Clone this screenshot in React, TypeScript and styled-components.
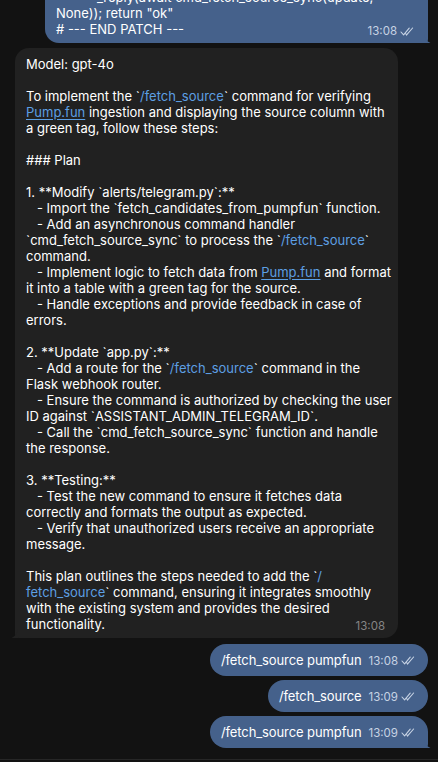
import React from "react";
import styled, { createGlobalStyle } from "styled-components";

const Global = createGlobalStyle`
  html, body { margin: 0; padding: 0; background: #121212; }
  body { font-family: Inter, "Noto Sans", "Liberation Sans", sans-serif; -webkit-font-smoothing: antialiased; }
`;

const Screen = styled.div`
  height: 762px;
  display: flex;
  flex-direction: column;
  background: #121212;
  overflow: hidden;
`;

const Chat = styled.div`
  flex: 1;
  min-height: 0;
  display: flex;
  flex-direction: column;
  justify-content: flex-end;
  overflow: hidden;
  padding: 0 10px 11px 15px;
  & > * { flex-shrink: 0; }
`;

const Footer = styled.div`
  flex-shrink: 0;
  height: 2px;
  border-top: 1px solid #262626;
  background: #121212;
`;

const Bubble = styled.div<{ $out?: boolean; $gap: number; $width?: number }>`
  position: relative;
  align-self: ${(p) => (p.$out ? "flex-end" : "flex-start")};
  margin-top: ${(p) => p.$gap}px;
  width: ${(p) => (p.$width ? `${p.$width}px` : "auto")};
  box-sizing: border-box;
  background: ${(p) => (p.$out ? "#45618b" : "#212121")};
  color: #ffffff;
  border-radius: 14px;
  ${(p) => (p.$out ? "border-bottom-right-radius: 4px;" : "border-bottom-left-radius: 4px;")}
  padding: 8px 13px 6px 11px;
  font-size: 13px;
`;

const Pill = styled.div<{ $gap: number; $tail?: boolean }>`
  position: relative;
  align-self: flex-end;
  margin-top: ${(p) => p.$gap}px;
  height: 32px;
  box-sizing: border-box;
  display: flex;
  align-items: center;
  gap: 7px;
  padding: 0 12px 0 11px;
  background: #45618b;
  color: #ffffff;
  border-radius: 16px;
  ${(p) => (p.$tail ? "border-bottom-right-radius: 4px;" : "")}
  font-size: 13px;
`;

const Line = styled.div<{ $indent?: number }>`
  height: 16px;
  line-height: 16px;
  white-space: pre;
  padding-left: ${(p) => p.$indent ?? 0}px;
`;

const LastLine = styled(Line)`
  display: flex;
  justify-content: space-between;
  align-items: flex-start;
`;

const Cmd = styled.span`
  color: #5d9fe3;
`;

const Link = styled.span`
  color: #5d9fe3;
  text-decoration: underline;
  text-underline-offset: 2px;
`;

const Meta = styled.span<{ $out?: boolean }>`
  display: inline-flex;
  align-items: center;
  gap: 3px;
  font-size: 11.5px;
  line-height: 16px;
  padding-top: 2px;
  color: ${(p) => (p.$out ? "#c7d3e4" : "#858585")};
`;

const PillText = styled.span`
  white-space: pre;
  line-height: 16px;
  letter-spacing: -0.1px;
`;

const PillMeta = styled(Meta)`
  padding-top: 1px;
`;

const TailSvg = styled.svg<{ $out?: boolean }>`
  position: absolute;
  bottom: 0;
  ${(p) => (p.$out ? "right: -6px;" : "left: -7px;")}
  width: 10px;
  height: 14px;
`;

const Checks = () => (
  <svg width="15" height="9" viewBox="0 0 15 9" fill="none" stroke="currentColor" strokeWidth="1.1" strokeLinecap="round" strokeLinejoin="round">
    <path d="M1 5 L3.6 7.8 L9.2 1.2" />
    <path d="M6.6 7.8 L12.6 1" />
    <path d="M5.6 6.7 L6.6 7.8" />
  </svg>
);

const Tail = ({ out }: { out?: boolean }) =>
  out ? (
    <TailSvg $out viewBox="0 0 10 14">
      <path d="M0 0 C0 7 1.5 11.5 7 14 L0 14 Z" fill="#45618b" transform="translate(-0.5 0)" />
    </TailSvg>
  ) : (
    <TailSvg viewBox="0 0 10 14">
      <path d="M10 0 C10 7 8.5 11.5 3 14 L10 14 Z" fill="#212121" transform="translate(0.5 0)" />
    </TailSvg>
  );

const F = () => <Cmd>/fetch_source</Cmd>;

export default function App() {
  return (
    <Screen>
      <Global />
      <Chat>
        <Bubble $out $gap={0} $width={383}>
          <Line>{'if text.startswith("/fetch_source"):'}</Line>
          <Line $indent={41}>{"_reply(await cmd_fetch_source_sync(update,"}</Line>
          <Line>{'None)); return "ok"'}</Line>
          <LastLine>
            <span>{"# --- END PATCH ---"}</span>
            <Meta $out>
              13:08
              <Checks />
            </Meta>
          </LastLine>
          <Tail out />
        </Bubble>

        <Bubble $gap={5} $width={383}>
          <Line>Model: gpt-4o</Line>
          <Line> </Line>
          <Line>
            To implement the `<F />` command for verifying
          </Line>
          <Line>
            <Link>Pump.fun</Link> ingestion and displaying the source column with
          </Line>
          <Line>a green tag, follow these steps:</Line>
          <Line> </Line>
          <Line>### Plan</Line>
          <Line> </Line>
          <Line>1. **Modify `alerts/telegram.py`:**</Line>
          <Line>{"   - Import the `fetch_candidates_from_pumpfun` function."}</Line>
          <Line>{"   - Add an asynchronous command handler"}</Line>
          <Line>
            `cmd_fetch_source_sync` to process the `<F />`
          </Line>
          <Line>command.</Line>
          <Line>
            {"   - Implement logic to fetch data from "}
            <Link>Pump.fun</Link> and format
          </Line>
          <Line>it into a table with a green tag for the source.</Line>
          <Line>{"   - Handle exceptions and provide feedback in case of"}</Line>
          <Line>errors.</Line>
          <Line> </Line>
          <Line>2. **Update `app.py`:**</Line>
          <Line>
            {"   - Add a route for the `"}
            <F />` command in the
          </Line>
          <Line>Flask webhook router.</Line>
          <Line>{"   - Ensure the command is authorized by checking the user"}</Line>
          <Line>ID against `ASSISTANT_ADMIN_TELEGRAM_ID`.</Line>
          <Line>{"   - Call the `cmd_fetch_source_sync` function and handle"}</Line>
          <Line>the response.</Line>
          <Line> </Line>
          <Line>3. **Testing:**</Line>
          <Line>{"   - Test the new command to ensure it fetches data"}</Line>
          <Line>correctly and formats the output as expected.</Line>
          <Line>{"   - Verify that unauthorized users receive an appropriate"}</Line>
          <Line>message.</Line>
          <Line> </Line>
          <Line>
            This plan outlines the steps needed to add the `<Cmd>/</Cmd>
          </Line>
          <Line>
            <Cmd>fetch_source</Cmd>` command, ensuring it integrates smoothly
          </Line>
          <Line>with the existing system and provides the desired</Line>
          <LastLine>
            <span>functionality.</span>
            <Meta>13:08</Meta>
          </LastLine>
          <Tail />
        </Bubble>

        <Pill $gap={6}>
          <PillText>/fetch_source pumpfun</PillText>
          <PillMeta $out>
            13:08
            <Checks />
          </PillMeta>
        </Pill>
        <Pill $gap={4}>
          <PillText>/fetch_source</PillText>
          <PillMeta $out>
            13:09
            <Checks />
          </PillMeta>
        </Pill>
        <Pill $gap={4} $tail>
          <PillText>/fetch_source pumpfun</PillText>
          <PillMeta $out>
            13:09
            <Checks />
          </PillMeta>
          <Tail out />
        </Pill>
      </Chat>
      <Footer />
    </Screen>
  );
}
